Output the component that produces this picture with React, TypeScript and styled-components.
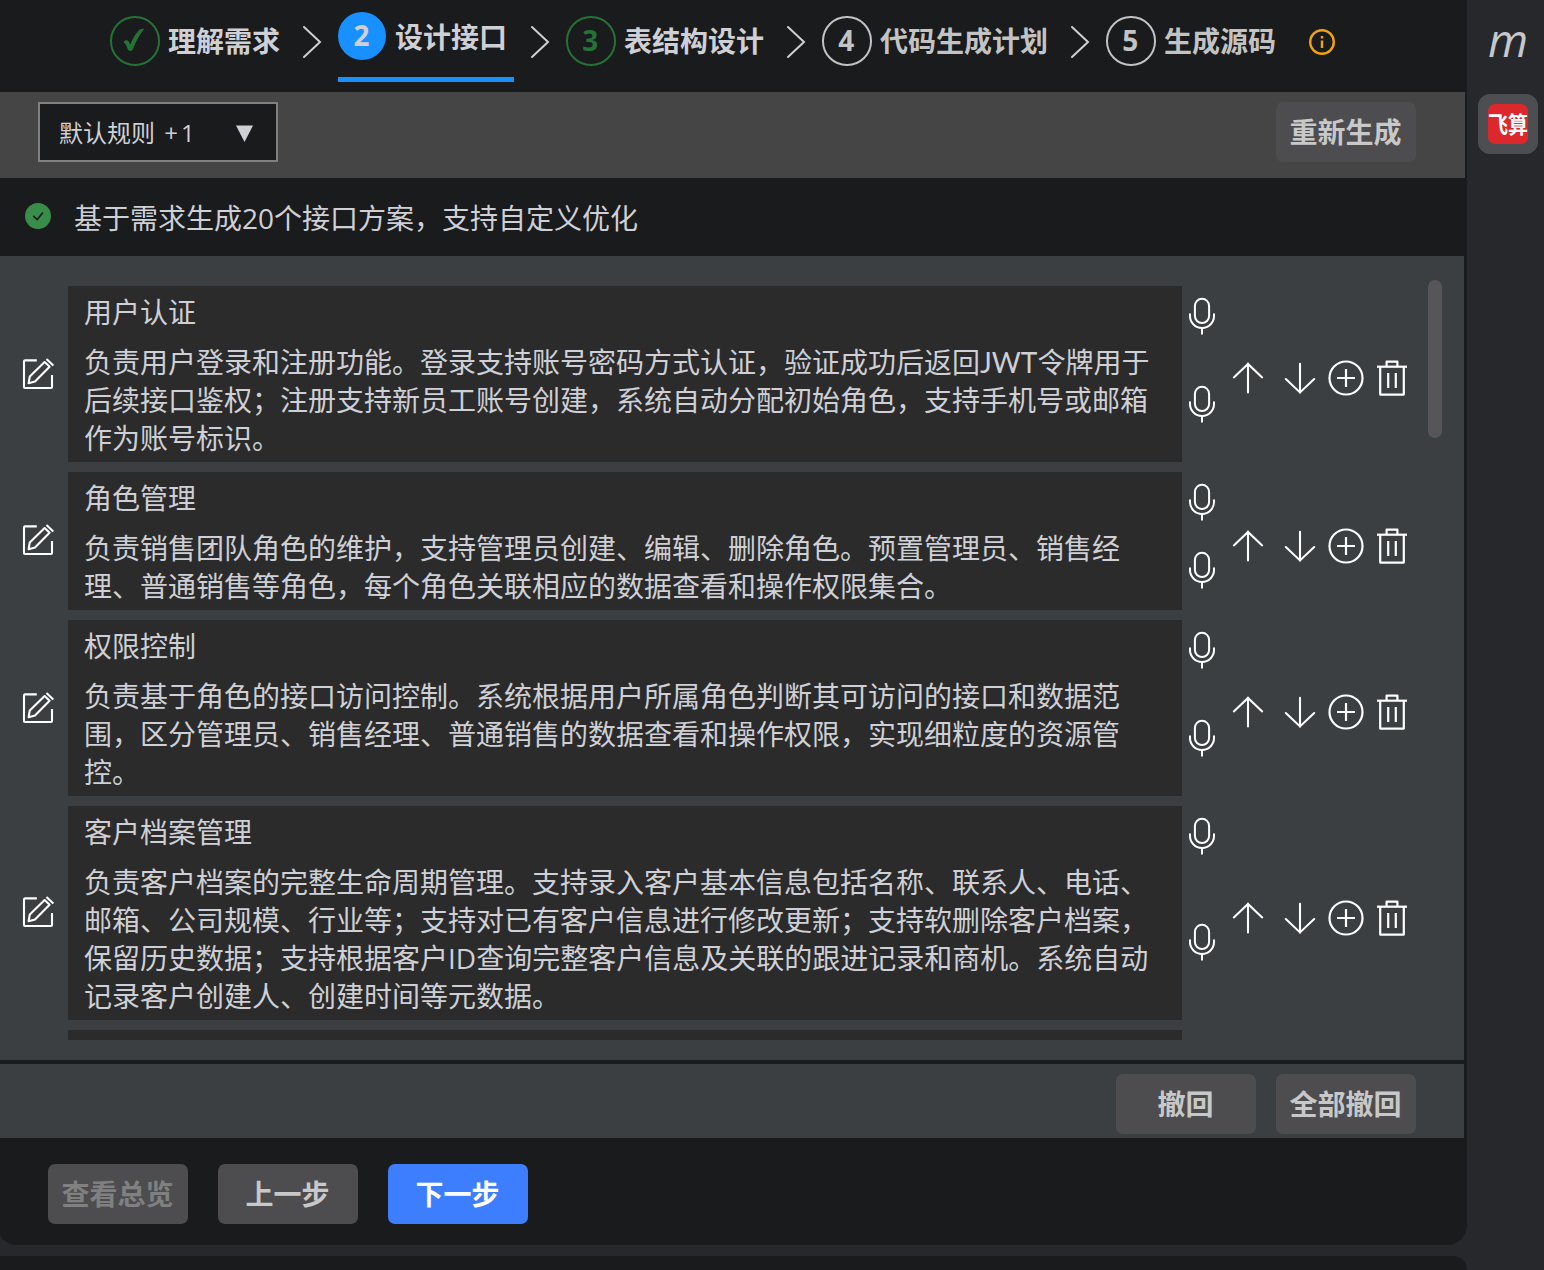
import React from "react";
import styled, { createGlobalStyle, css } from "styled-components";

const Global = createGlobalStyle`
  * { box-sizing: border-box; }
  html, body { margin: 0; background: #27282c; }
  body {
    font-family: "Open Sans", "Noto Sans CJK SC", sans-serif;
    font-size: 28px;
    color: #ced0d6;
    overflow: hidden;
  }
  svg { display: block; flex: none; }
`;

const Shell = styled.div`
  display: flex;
  width: 1544px;
  height: 1270px;
  overflow: hidden;
  background: #27282c;
`;

const Main = styled.div`
  display: flex;
  flex-direction: column;
  flex: none;
  width: 1467px;
  gap: 11px;
`;

const Panel = styled.main`
  display: flex;
  flex-direction: column;
  flex: none;
  height: 1245px;
  margin-left: -3px;
  padding-left: 3px;
  background: #1a1b1d;
  border-radius: 0 0 20px 20px;
`;

const NextPanel = styled.div`
  flex: 1;
  background: #1a1b1d;
  border-top-right-radius: 20px;
`;

const Steps = styled.nav`
  display: flex;
  align-items: flex-start;
  height: 92px;
  padding-left: 110px;
`;

const StepItem = styled.div<{ $active?: boolean }>`
  display: flex;
  align-items: center;
  gap: ${(p) => (p.$active ? 9 : 8)}px;
  padding-right: ${(p) => (p.$active ? 7 : 6)}px;
  height: ${(p) => (p.$active ? 70 : 50)}px;
  margin-top: ${(p) => (p.$active ? 12 : 16)}px;
  ${(p) =>
    p.$active &&
    css`
      padding-bottom: 17px;
      border-bottom: 5px solid #1890ff;
    `}
`;

type Tone = "done" | "active" | "ready" | "idle";

const toneColor: Record<Tone, string> = {
  done: "#257236",
  active: "#ced0d6",
  ready: "#257236",
  idle: "#c3c3c3",
};

const StepBadge = styled.span<{ $tone: Tone }>`
  display: flex;
  align-items: center;
  justify-content: center;
  flex: none;
  width: ${(p) => (p.$tone === "active" ? 48 : 49.6)}px;
  height: ${(p) => (p.$tone === "active" ? 48 : 49.6)}px;
  margin-right: ${(p) => (p.$tone === "active" ? 0 : 0.4)}px;
  border-radius: 50%;
  border: ${(p) => (p.$tone === "active" ? "none" : `2px solid ${toneColor[p.$tone]}`)};
  background: ${(p) => (p.$tone === "active" ? "#1890ff" : "transparent")};
  color: ${(p) => toneColor[p.$tone]};
  font-weight: 700;
  line-height: 44px;
  padding: 0 1px 2px 0;
`;

const StepLabel = styled.span<{ $tone: Tone }>`
  font-weight: 700;
  line-height: 40px;
  white-space: nowrap;
  padding-top: ${(p) => (p.$tone === "active" ? 2 : 0)}px;
  color: ${(p) => (p.$tone === "idle" ? "#c3c3c3" : "#ced0d6")};
`;

const ChevronBox = styled.span`
  display: flex;
  justify-content: center;
  flex: none;
  width: 52px;
  padding-top: 25px;
`;

const InfoBox = styled.span`
  padding: 28px 0 0 26px;
`;

const Toolbar = styled.div`
  display: flex;
  align-items: center;
  justify-content: space-between;
  width: 1465px;
  height: 86px;
  padding: 0 49px 6px 38px;
  background: #454545;
`;

const Select = styled.div`
  display: flex;
  align-items: center;
  justify-content: space-between;
  width: 240px;
  height: 60px;
  padding: 0 23px 0 19px;
  border: 2px solid #808080;
  background: #1a1b1d;
  font-size: 24px;
`;

const SelectText = styled.span`
  padding-bottom: 1px;
`;

const Count = styled.span`
  margin-left: 3px;
  letter-spacing: 3px;
`;

const Button = styled.button<{ $kind?: "primary" | "disabled" }>`
  width: 140px;
  height: 60px;
  padding: 0 1px 2px 0;
  border: none;
  border-radius: 7px;
  font: inherit;
  font-weight: 700;
  white-space: nowrap;
  background: ${(p) => (p.$kind === "primary" ? "#3d7eff" : "#4d4d4f")};
  color: ${(p) => (p.$kind === "primary" ? "#ffffff" : p.$kind === "disabled" ? "#808080" : "#c8c8c8")};
`;

const Status = styled.div`
  display: flex;
  align-items: center;
  gap: 23px;
  height: 78px;
  padding: 0 0 2px 25px;
`;

const StatusText = styled.span`
  padding-top: 2px;
`;

const Content = styled.section`
  display: flex;
  width: 1464px;
  height: 804px;
  padding: 24px 22px 20px 0;
  background: #3c3f41;
`;

const List = styled.div`
  display: flex;
  flex-direction: column;
  gap: 10px;
  flex: 1;
  padding-top: 6px;
  overflow: hidden;
`;

const Row = styled.article`
  display: flex;
  flex: none;
`;

const EditCell = styled.div<{ $odd?: boolean }>`
  display: flex;
  align-items: center;
  width: 68px;
  padding: 0 0 ${(p) => (p.$odd ? 0 : 2)}px 22px;
`;

const Card = styled.div`
  width: 1114px;
  padding: 7px 16px 5px;
  background: #2b2b2b;
  line-height: 38px;
  white-space: pre;
`;

const CardTitle = styled.div`
  height: 38px;
  margin-bottom: 12px;
`;

const CardLine = styled.div`
  height: 38px;
`;

const Acronym = styled.span`
  font-family: Lato, sans-serif;
  letter-spacing: 0;
`;

const MicCell = styled.div`
  display: flex;
  flex-direction: column;
  width: 40px;
  padding: 11px 0 0 6px;
`;

const MicBody = styled.div<{ $odd: boolean }>`
  display: flex;
  flex: 1;
  align-items: center;
  padding-top: ${(p) => (p.$odd ? 11 : 9)}px;
`;

const Actions = styled.div<{ $odd: boolean }>`
  display: flex;
  align-items: center;
  padding: ${(p) => (p.$odd ? 8 : 10)}px 0 0 8px;
  gap: 12px;
`;

const IconPair = styled.div`
  display: flex;
  gap: 16px;
  margin-right: -2px;
`;

const ScrollThumb = styled.div`
  width: 14px;
  height: 158px;
  border-radius: 7px;
  background: #565658;
`;

const UndoBar = styled.div`
  display: flex;
  justify-content: flex-end;
  gap: 20px;
  width: 1464px;
  height: 74px;
  margin-top: 4px;
  padding: 10px 48px 0 0;
  background: #3c3f41;
`;

const Footer = styled.footer`
  display: flex;
  gap: 30px;
  padding: 26px 0 0 48px;
`;

const Rail = styled.aside`
  display: flex;
  flex-direction: column;
  align-items: center;
  flex: 1;
  padding-left: 5px;
`;

const RailLetter = styled.div`
  height: 94px;
  font-family: "Open Sans", sans-serif;
  font-style: italic;
  font-size: 46px;
  line-height: 78px;
  color: #c6c8ce;
`;

const RailTab = styled.div`
  display: flex;
  align-items: center;
  justify-content: center;
  width: 60px;
  height: 60px;
  border-radius: 12px;
  background: #4d4e51;
`;

const Logo = styled.div`
  width: 40px;
  height: 40px;
  border-radius: 7px;
  background: #dc282c;
  color: #fff;
  font-family: "Noto Sans CJK SC", sans-serif;
  font-size: 20px;
  font-weight: 700;
  line-height: 40px;
  text-align: center;
  overflow: hidden;
`;

const LogoText = styled.span`
  display: block;
  transform: scaleY(1.13);
`;

const Chevron = () => (
  <svg width="20" height="34" viewBox="0 0 20 34" fill="none" stroke="#d0d0d4" strokeWidth="2" strokeLinecap="round">
    <path d="M2 2 L18 17 L2 32" />
  </svg>
);

const InfoIcon = () => (
  <svg width="28" height="28" viewBox="0 0 28 28" fill="none" stroke="#f0a30a" strokeWidth="2.4">
    <circle cx="14" cy="14" r="11.8" />
    <path d="M14 12.5 V20 M14 8 V10.6" />
  </svg>
);

const SuccessIcon = () => (
  <svg width="26" height="26" viewBox="0 0 26 26" fill="none">
    <circle cx="13" cy="13" r="13" fill="#388e48" />
    <path d="M8.3 12.9 L12.2 16.6 L18 9.6" stroke="#1a1b1d" strokeWidth="1.6" />
  </svg>
);

const TickIcon = () => (
  <svg width="22" height="24" viewBox="0 0 22 24" fill="#257236">
    <path d="M0.5 14.2 C2 11.8 4.6 11.6 5.8 13.8 L7.4 16.6 C10 10 13.5 4.5 16.8 1.6 C18 0.8 19.5 0.6 21.3 0.8 C17 6 13.4 12.4 10.4 20 C9.6 22.6 8.4 23.2 6.6 22.8 C5.6 22.6 5 22 4.6 20.8 C3.6 17.8 2.6 15.6 0.5 14.2 Z" />
  </svg>
);

const EditIcon = () => (
  <svg width="32" height="32" viewBox="0 0 32 32" fill="none" stroke="#fff" strokeWidth="2.1" strokeLinejoin="round">
    <path d="M14.8 2.4 H3 Q2 2.4 2 3.4 V29 Q2 30 3 30 H29 Q30 30 30 29 V17" />
    <path d="M6.6 25.3 L7.8 18.4 L22.6 4 L27.6 8.8 L13 23.4 Z" />
    <path d="M24.5 1 L31.3 7.6" />
  </svg>
);

const MicIcon = () => (
  <svg width="28" height="38" viewBox="0 0 28 38" fill="none" stroke="#fff" strokeWidth="2">
    <rect x="6.9" y="1.8" width="14.2" height="24.2" rx="7.1" />
    <path d="M2 16.5 V19 A12 12 0 0 0 26 19 V16.5" />
    <path d="M14 31 V37.6" />
  </svg>
);

const ArrowIcon = ({ down }: { down?: boolean }) => (
  <svg width="36" height="36" viewBox="0 0 36 36" fill="none" stroke="#fff" strokeWidth="2.1" strokeLinecap="round">
    <path d={down ? "M18 3.7 V32.8 M3.8 19 L18 32.4 L32.2 19" : "M18 32.4 V3.6 M3.8 17.4 L18 4 L32.2 17.4"} />
  </svg>
);

const PlusIcon = () => (
  <svg width="36" height="36" viewBox="0 0 36 36" fill="none" stroke="#fff" strokeWidth="2.2">
    <circle cx="18" cy="18" r="16.5" />
    <path d="M18 9 V27 M9 18 H27" />
  </svg>
);

const TrashIcon = () => (
  <svg width="32" height="36" viewBox="0 0 32 36" fill="none" stroke="#fff" strokeWidth="2.2">
    <path d="M1 6.7 H31" />
    <path d="M10.6 6.7 V1.6 H21.4 V6.7" strokeLinejoin="round" />
    <path d="M4.2 6.7 V34.6 H27.8 V6.7" strokeLinejoin="round" />
    <path d="M12.2 13 V28 M19.8 13 V28" />
  </svg>
);

const steps: { mark: React.ReactNode; label: string; tone: Tone }[] = [
  { mark: <TickIcon />, label: "理解需求", tone: "done" },
  { mark: "2", label: "设计接口", tone: "active" },
  { mark: "3", label: "表结构设计", tone: "ready" },
  { mark: "4", label: "代码生成计划", tone: "idle" },
  { mark: "5", label: "生成源码", tone: "idle" },
];

const modules: { title: string; lines: React.ReactNode[] }[] = [
  {
    title: "用户认证",
    lines: [
      <>
        负责用户登录和注册功能。登录支持账号密码方式认证，验证成功后返回<Acronym>JWT</Acronym>令牌用于
      </>,
      "后续接口鉴权；注册支持新员工账号创建，系统自动分配初始角色，支持手机号或邮箱",
      "作为账号标识。",
    ],
  },
  {
    title: "角色管理",
    lines: [
      "负责销售团队角色的维护，支持管理员创建、编辑、删除角色。预置管理员、销售经",
      "理、普通销售等角色，每个角色关联相应的数据查看和操作权限集合。",
    ],
  },
  {
    title: "权限控制",
    lines: [
      "负责基于角色的接口访问控制。系统根据用户所属角色判断其可访问的接口和数据范",
      "围，区分管理员、销售经理、普通销售的数据查看和操作权限，实现细粒度的资源管",
      "控。",
    ],
  },
  {
    title: "客户档案管理",
    lines: [
      "负责客户档案的完整生命周期管理。支持录入客户基本信息包括名称、联系人、电话、",
      "邮箱、公司规模、行业等；支持对已有客户信息进行修改更新；支持软删除客户档案，",
      "保留历史数据；支持根据客户ID查询完整客户信息及关联的跟进记录和商机。系统自动",
      "记录客户创建人、创建时间等元数据。",
    ],
  },
];

export default function App() {
  return (
    <Shell>
      <Global />
      <Main>
        <Panel>
          <Steps>
            {steps.map((s, i) => (
              <React.Fragment key={s.label}>
                {i > 0 && (
                  <ChevronBox>
                    <Chevron />
                  </ChevronBox>
                )}
                <StepItem $active={s.tone === "active"}>
                  <StepBadge $tone={s.tone}>{s.mark}</StepBadge>
                  <StepLabel $tone={s.tone}>{s.label}</StepLabel>
                </StepItem>
              </React.Fragment>
            ))}
            <InfoBox>
              <InfoIcon />
            </InfoBox>
          </Steps>
          <Toolbar>
            <Select>
              <SelectText>
                默认规则 <Count>+1</Count>
              </SelectText>
              <svg width="17" height="19" viewBox="0 0 17 19" fill="#ced0d6">
                <path d="M0 2.5 H17 L8.5 19 Z" />
              </svg>
            </Select>
            <Button>重新生成</Button>
          </Toolbar>
          <Status>
            <SuccessIcon />
            <StatusText>基于需求生成20个接口方案，支持自定义优化</StatusText>
          </Status>
          <Content>
            <List>
              {modules.map((m) => {
                const odd = m.lines.length % 2 === 1;
                return (
                  <Row key={m.title}>
                    <EditCell $odd={odd}>
                      <EditIcon />
                    </EditCell>
                    <Card>
                      <CardTitle>{m.title}</CardTitle>
                      {m.lines.map((l, i) => (
                        <CardLine key={i}>{l}</CardLine>
                      ))}
                    </Card>
                    <MicCell>
                      <MicIcon />
                      <MicBody $odd={odd}>
                        <MicIcon />
                      </MicBody>
                    </MicCell>
                    <Actions $odd={odd}>
                      <IconPair>
                        <ArrowIcon />
                        <ArrowIcon down />
                      </IconPair>
                      <PlusIcon />
                      <TrashIcon />
                    </Actions>
                  </Row>
                );
              })}
              <Row>
                <EditCell />
                <Card />
              </Row>
            </List>
            <ScrollThumb />
          </Content>
          <UndoBar>
            <Button>撤回</Button>
            <Button>全部撤回</Button>
          </UndoBar>
          <Footer>
            <Button $kind="disabled">查看总览</Button>
            <Button>上一步</Button>
            <Button $kind="primary">下一步</Button>
          </Footer>
        </Panel>
        <NextPanel />
      </Main>
      <Rail>
        <RailLetter>m</RailLetter>
        <RailTab>
          <Logo>
            <LogoText>飞算</LogoText>
          </Logo>
        </RailTab>
      </Rail>
    </Shell>
  );
}
